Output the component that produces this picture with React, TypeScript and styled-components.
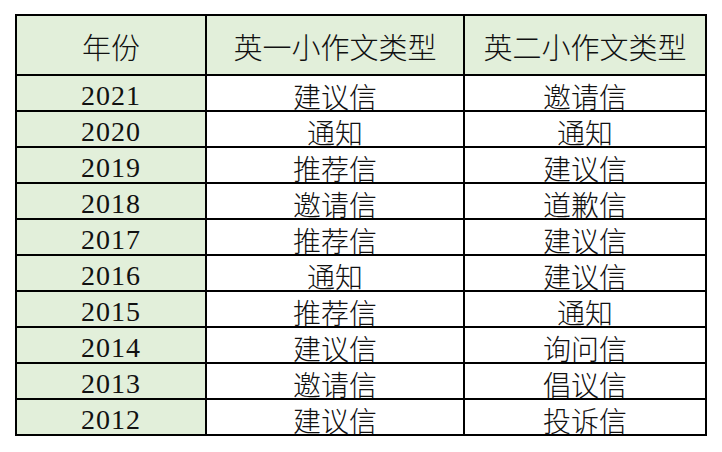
import React from 'react'
import styled, { createGlobalStyle } from 'styled-components'

const GlobalStyle = createGlobalStyle`
  html, body {
    margin: 0;
    padding: 0;
    background: #ffffff;
  }
`

const Page = styled.div`
  padding: 14px 0 0 15px;
  width: 722px;
  height: 452px;
  box-sizing: border-box;
`

const Grid = styled.div`
  display: grid;
  grid-template-columns: 188px 256px 240px;
  grid-template-rows: 58px repeat(10, 34px);
  gap: 2px;
  padding: 2px;
  width: max-content;
  background: #000000;
`

const Cell = styled.div<{ $green?: boolean; $num?: boolean; $head?: boolean }>`
  display: flex;
  align-items: center;
  justify-content: center;
  padding-top: ${({ $head }) => ($head ? '3px' : '5px')};
  box-sizing: border-box;
  overflow: hidden;
  background: ${({ $green }) => ($green ? '#e2efda' : '#ffffff')};
  color: #111111;
  font-family: ${({ $num }) =>
    $num ? '"Liberation Serif", "Times New Roman", serif' : '"Noto Sans CJK SC", sans-serif'};
  font-size: ${({ $head }) => ($head ? '29px' : '28px')};
  font-weight: 300;
  letter-spacing: ${({ $num }) => ($num ? '1px' : '0')};
  line-height: 1;
  white-space: nowrap;
`

const rows: [string, string, string][] = [
  ['2021', '建议信', '邀请信'],
  ['2020', '通知', '通知'],
  ['2019', '推荐信', '建议信'],
  ['2018', '邀请信', '道歉信'],
  ['2017', '推荐信', '建议信'],
  ['2016', '通知', '建议信'],
  ['2015', '推荐信', '通知'],
  ['2014', '建议信', '询问信'],
  ['2013', '邀请信', '倡议信'],
  ['2012', '建议信', '投诉信'],
]

export default function App() {
  return (
    <>
      <GlobalStyle />
      <Page>
        <Grid>
          <Cell $green $head>年份</Cell>
          <Cell $green $head>英一小作文类型</Cell>
          <Cell $green $head>英二小作文类型</Cell>
          {rows.map(([year, a, b]) => (
            <React.Fragment key={year}>
              <Cell $green $num>{year}</Cell>
              <Cell>{a}</Cell>
              <Cell>{b}</Cell>
            </React.Fragment>
          ))}
        </Grid>
      </Page>
    </>
  )
}
